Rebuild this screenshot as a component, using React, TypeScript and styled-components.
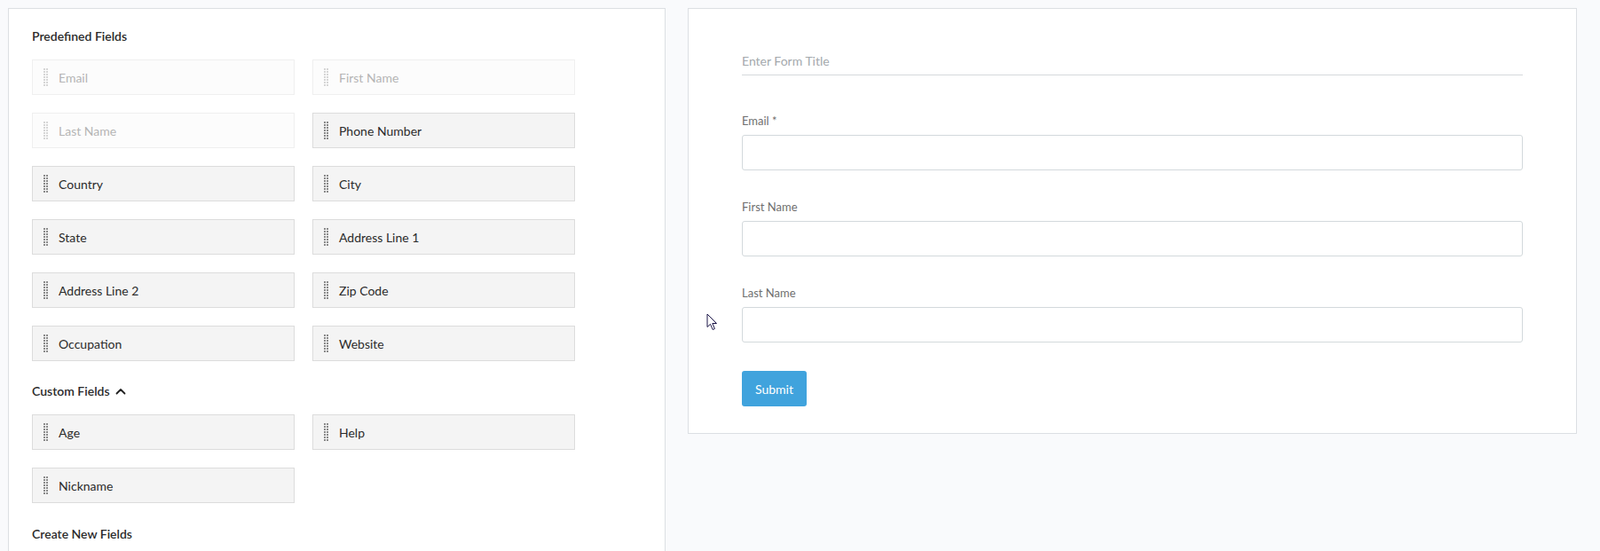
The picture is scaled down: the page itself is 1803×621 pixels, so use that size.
import React from "react";
import styled, { createGlobalStyle } from "styled-components";

const Global = createGlobalStyle`
  html, body { margin: 0; padding: 0; background: #f9fafc; overflow: hidden; }
  body { font-family: Lato, "Open Sans", "Liberation Sans", sans-serif; -webkit-font-smoothing: antialiased; }
  * { box-sizing: border-box; }
`;

const Page = styled.div`
  position: relative;
  display: flex;
  align-items: flex-start;
  gap: 25px;
  padding: 9px 26px 0 9px;
  height: 621px;
`;

const LeftPanel = styled.section`
  width: 741px;
  flex: none;
  background: #fff;
  border: 1px solid #dcdfe3;
  padding: 23px 26px 80px 26px;
  min-height: 700px;
`;

const SectionTitle = styled.div<{ $top?: number }>`
  display: flex;
  align-items: center;
  gap: 6px;
  font-size: 14px;
  line-height: 16px;
  font-weight: 600;
  color: #2a2a2a;
  margin-top: ${(p) => p.$top ?? 0}px;
  margin-bottom: 18px;
`;

const FieldGrid = styled.div`
  display: grid;
  grid-template-columns: 296px 296px;
  column-gap: 20px;
  row-gap: 20px;
`;

const FieldItem = styled.div<{ $disabled?: boolean }>`
  height: 40px;
  display: flex;
  align-items: center;
  gap: 12px;
  padding-left: 12px;
  background: ${(p) => (p.$disabled ? "#fcfcfc" : "#f4f4f4")};
  border: 1px solid ${(p) => (p.$disabled ? "#efefef" : "#dcdcdc")};
  color: ${(p) => (p.$disabled ? "#b5b5b5" : "#2b2b2b")};
  font-size: 14px;
  cursor: ${(p) => (p.$disabled ? "default" : "grab")};
`;

const RightPanel = styled.section`
  flex: 1;
  background: #fff;
  border: 1px solid #dcdfe3;
  padding: 42px 60px 30px 60px;
`;

const TitleInput = styled.input`
  display: block;
  width: 100%;
  height: 33px;
  border: none;
  border-bottom: 1px solid #d5d9dc;
  outline: none;
  padding: 0;
  font-family: inherit;
  font-size: 14px;
  color: #333;
  background: transparent;
  &::placeholder { color: #a4a9ad; }
`;

const FormGroup = styled.div<{ $first?: boolean }>`
  margin-top: ${(p) => (p.$first ? 42 : 32)}px;
`;

const Label = styled.label`
  display: block;
  font-size: 13px;
  line-height: 18px;
  color: #6f6f6f;
  margin-bottom: 7px;
`;

const TextInput = styled.input`
  display: block;
  width: 100%;
  height: 40px;
  border: 1px solid #d3d9dc;
  border-radius: 3px;
  outline: none;
  padding: 0 10px;
  font-family: inherit;
  font-size: 14px;
  background: #fff;
`;

const SubmitButton = styled.button`
  margin-top: 32px;
  width: 73px;
  height: 40px;
  border: none;
  border-radius: 3px;
  background: #40a3dd;
  color: #fff;
  font-family: inherit;
  font-size: 14px;
  cursor: pointer;
`;

const Cursor = styled.svg`
  position: absolute;
  left: 796px;
  top: 353px;
  pointer-events: none;
`;

const Grip = ({ light }: { light?: boolean }) => {
  const dots = [];
  for (let r = 0; r < 7; r++) {
    dots.push(<rect key={`a${r}`} x={0} y={r * 3} width={2} height={2} />);
    dots.push(<rect key={`b${r}`} x={3} y={r * 3} width={2} height={2} />);
  }
  return (
    <svg width="5" height="20" viewBox="0 0 5 20" fill={light ? "#d6d6d6" : "#8a8a8a"} style={{ flex: "none" }}>
      {dots}
    </svg>
  );
};

const ChevronUp = () => (
  <svg width="12" height="8" viewBox="0 0 12 8" fill="none" stroke="#222" strokeWidth="1.8" strokeLinecap="round" strokeLinejoin="round">
    <path d="M1.5 6.5 L6 2 L10.5 6.5" />
  </svg>
);

const predefined: { label: string; disabled?: boolean }[] = [
  { label: "Email", disabled: true },
  { label: "First Name", disabled: true },
  { label: "Last Name", disabled: true },
  { label: "Phone Number" },
  { label: "Country" },
  { label: "City" },
  { label: "State" },
  { label: "Address Line 1" },
  { label: "Address Line 2" },
  { label: "Zip Code" },
  { label: "Occupation" },
  { label: "Website" },
];

const custom = ["Age", "Help", "Nickname"];

export default function App() {
  return (
    <>
      <Global />
      <Page>
        <LeftPanel>
          <SectionTitle>Predefined Fields</SectionTitle>
          <FieldGrid>
            {predefined.map((f) => (
              <FieldItem key={f.label} $disabled={f.disabled}>
                <Grip light={f.disabled} />
                {f.label}
              </FieldItem>
            ))}
          </FieldGrid>
          <SectionTitle $top={26}>
            Custom Fields <ChevronUp />
          </SectionTitle>
          <FieldGrid>
            {custom.map((c) => (
              <FieldItem key={c}>
                <Grip />
                {c}
              </FieldItem>
            ))}
          </FieldGrid>
          <SectionTitle $top={27}>Create New Fields</SectionTitle>
        </LeftPanel>
        <RightPanel>
          <TitleInput placeholder="Enter Form Title" />
          <FormGroup $first>
            <Label>Email *</Label>
            <TextInput />
          </FormGroup>
          <FormGroup>
            <Label>First Name</Label>
            <TextInput />
          </FormGroup>
          <FormGroup>
            <Label>Last Name</Label>
            <TextInput />
          </FormGroup>
          <SubmitButton>Submit</SubmitButton>
        </RightPanel>
        <Cursor width="13" height="20" viewBox="0 0 13 20">
          <path d="M1 1 L1 15.5 L4.5 12.3 L7.2 18.5 L9.4 17.5 L6.8 11.5 L11.5 11.5 Z" fill="#fff" stroke="#1a1446" strokeWidth="1" strokeLinejoin="round" />
        </Cursor>
      </Page>
    </>
  );
}
